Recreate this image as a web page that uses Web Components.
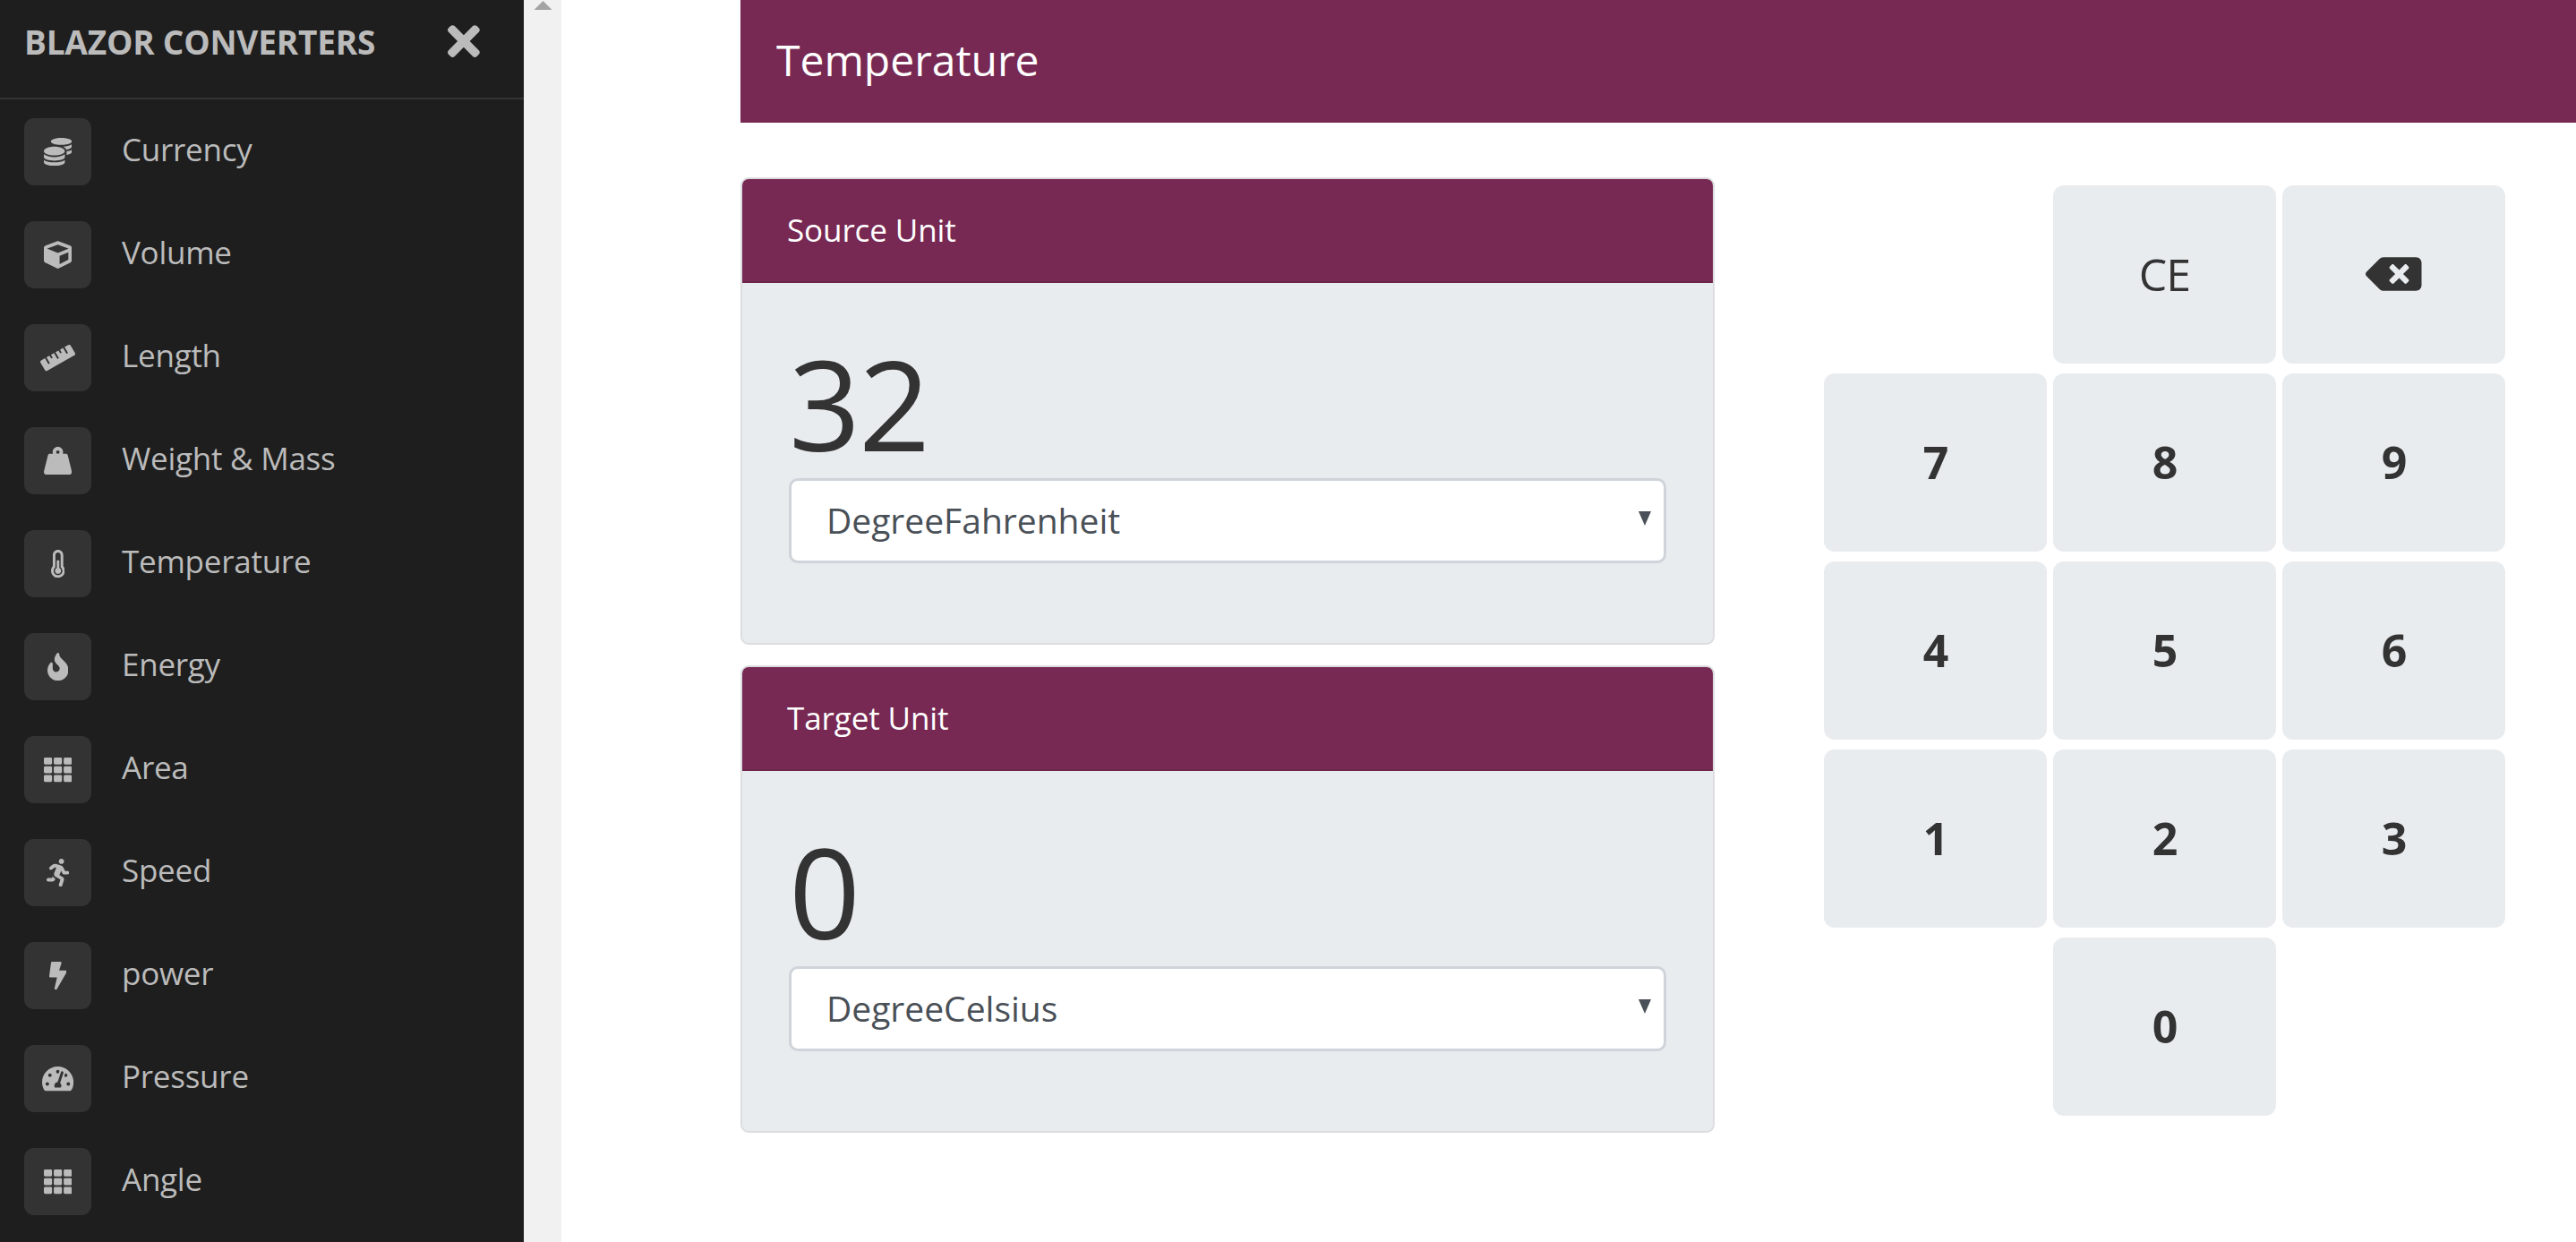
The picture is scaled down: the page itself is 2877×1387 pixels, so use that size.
<!DOCTYPE html>
<html>
<head>
<meta charset="utf-8">
<title>Blazor Converters</title>
<style>
html, body { margin: 0; height: 100%; overflow: hidden; background: #fff; }
body { font-family: "Open Sans", "Noto Sans", sans-serif; display: flex; }
</style>
</head>
<body>
<app-sidebar heading="BLAZOR CONVERTERS">
  <nav-item icon="coins">Currency</nav-item>
  <nav-item icon="cube">Volume</nav-item>
  <nav-item icon="ruler">Length</nav-item>
  <nav-item icon="weight">Weight &amp; Mass</nav-item>
  <nav-item icon="thermo">Temperature</nav-item>
  <nav-item icon="fire">Energy</nav-item>
  <nav-item icon="th">Area</nav-item>
  <nav-item icon="run">Speed</nav-item>
  <nav-item icon="bolt">power</nav-item>
  <nav-item icon="gauge">Pressure</nav-item>
  <nav-item icon="th">Angle</nav-item>
</app-sidebar>
<fake-scrollbar></fake-scrollbar>
<converter-page heading="Temperature">
  <unit-card heading="Source Unit" value="32" unit="DegreeFahrenheit"></unit-card>
  <unit-card heading="Target Unit" value="0" unit="DegreeCelsius"></unit-card>
  <key-pad slot="pad"></key-pad>
</converter-page>

<script>
// font awesome 5 solid shapes: [viewBox width, path]
const ICONS = {
  coins: [512, 'M0 405.3V448c0 35.3 86 64 192 64s192-28.7 192-64v-42.7C342.7 434.4 267.2 448 192 448S41.3 434.4 0 405.3zM320 128c106 0 192-28.7 192-64S426 0 320 0 128 28.7 128 64s86 64 192 64zM0 300.4V352c0 35.3 86 64 192 64s192-28.7 192-64v-51.6c-41.3 34-116.9 51.6-192 51.6S41.3 334.4 0 300.4zm416 11c57.3-11.1 96-31.7 96-55.4v-42.7c-23.2 16.4-57.3 27.6-96 34.5v63.6zM192 160C86 160 0 195.8 0 240s86 80 192 80 192-35.8 192-80-86-80-192-80zm219.3 56.3c60-10.8 100.7-32 100.7-56.3v-42.7c-35.5 25.1-96.5 38.6-160.7 41.8 29.5 14.3 51.2 33.5 60 57.2z'],
  cube: [512, 'M239.1 6.3l-208 78c-18.7 7-31.1 25-31.1 45v225.1c0 18.2 10.3 34.8 26.5 42.9l208 104c13.5 6.8 29.4 6.8 42.9 0l208-104c16.3-8.1 26.5-24.8 26.5-42.9V129.3c0-20-12.4-37.9-31.1-44.9l-208-78C262 2.2 250 2.2 239.1 6.3zM256 68.4l192 72v1.1l-192 78-192-78v-1.1l192-72zm32 356V275.5l160-65v133.9l-160 80z'],
  ruler: [640, 'M635.7 167.2L556.1 31.7c-8.8-15-28.3-20.1-43.5-11.5l-69 39.1L503.3 161c2.2 3.8.9 8.5-2.9 10.7l-13.8 7.8c-3.8 2.2-8.7.9-10.9-2.9L416 75l-55.2 31.3 27.9 47.4c2.2 3.8.9 8.5-2.9 10.7l-13.8 7.8c-3.8 2.2-8.7.9-10.9-2.9L333.2 122 278 153.3 337.8 255c2.2 3.7.9 8.5-2.9 10.7l-13.8 7.8c-3.8 2.2-8.7.9-10.9-2.9l-59.7-101.7-55.2 31.3 27.9 47.4c2.2 3.8.9 8.5-2.9 10.7l-13.8 7.8c-3.8 2.2-8.7.9-10.9-2.9l-27.9-47.5-55.2 31.3 59.7 101.7c2.2 3.7.9 8.5-2.9 10.7l-13.8 7.8c-3.8 2.2-8.7.9-10.9-2.9L84.9 262.9l-69 39.1C.7 310.7-4.6 329.8 4.2 344.8l79.6 135.6c8.8 15 28.3 20.1 43.5 11.5L624.1 210c15.2-8.6 20.4-27.8 11.6-42.8z'],
  weight: [512, 'M510.28 445.86l-73.03-292.13c-3.8-15.19-16.44-25.72-30.87-25.72h-60.25c3.57-10.05 5.88-20.72 5.88-32 0-53.02-42.98-96-96-96s-96 42.98-96 96c0 11.28 2.3 21.95 5.88 32h-60.25c-14.43 0-27.08 10.54-30.87 25.72L1.72 445.86C-6.61 479.17 16.38 512 48.03 512h415.95c31.64 0 54.63-32.83 46.3-66.14zM256 128c-17.64 0-32-14.36-32-32s14.36-32 32-32 32 14.36 32 32-14.36 32-32 32z'],
  thermo: [256, 'M184 384c0 30.928-25.072 56-56 56s-56-25.072-56-56 25.072-56 56-56 56 25.072 56 56zm40-84.653C243.912 322.091 256 351.636 256 384c0 70.692-57.308 128-128 128-.639 0-1.295-.004-1.935-.013C55.821 510.94-.525 452.396.007 382.127.249 350.196 12.234 321.042 32 299.347V96c0-53.019 42.981-96 96-96s96 42.981 96 96v203.347zM208 384c0-34.339-19.37-52.19-32-66.502V96c0-26.467-21.533-48-48-48S80 69.533 80 96v221.498c-12.732 14.428-31.825 32.1-31.999 66.08-.224 43.876 35.563 80.116 79.423 80.42L128 464c44.112 0 80-35.888 80-80zM104 192h48v150h-48z'],
  fire: [384, 'M216 23.86c0-23.8-30.65-32.77-44.15-13.04C48 191.85 224 200 224 288c0 35.63-29.11 64.46-64.85 63.99-35.17-.45-63.15-29.77-63.15-64.94v-85.51c0-21.7-26.47-32.23-41.43-16.5C27.8 213.16 0 261.33 0 320c0 105.87 86.13 192 192 192s192-86.13 192-192c0-170.29-168-193-168-296.14z'],
  th: [512, 'M24 32h101.3a24 24 0 0 1 24 24v80a24 24 0 0 1-24 24H24a24 24 0 0 1-24-24V56a24 24 0 0 1 24-24zM205.3 32h101.4a24 24 0 0 1 24 24v80a24 24 0 0 1-24 24H205.3a24 24 0 0 1-24-24V56a24 24 0 0 1 24-24zM386.7 32H488a24 24 0 0 1 24 24v80a24 24 0 0 1-24 24H386.7a24 24 0 0 1-24-24V56a24 24 0 0 1 24-24zM24 192h101.3a24 24 0 0 1 24 24v80a24 24 0 0 1-24 24H24a24 24 0 0 1-24-24v-80a24 24 0 0 1 24-24zM205.3 192h101.4a24 24 0 0 1 24 24v80a24 24 0 0 1-24 24H205.3a24 24 0 0 1-24-24v-80a24 24 0 0 1 24-24zM386.7 192H488a24 24 0 0 1 24 24v80a24 24 0 0 1-24 24H386.7a24 24 0 0 1-24-24v-80a24 24 0 0 1 24-24zM24 352h101.3a24 24 0 0 1 24 24v80a24 24 0 0 1-24 24H24a24 24 0 0 1-24-24v-80a24 24 0 0 1 24-24zM205.3 352h101.4a24 24 0 0 1 24 24v80a24 24 0 0 1-24 24H205.3a24 24 0 0 1-24-24v-80a24 24 0 0 1 24-24zM386.7 352H488a24 24 0 0 1 24 24v80a24 24 0 0 1-24 24H386.7a24 24 0 0 1-24-24v-80a24 24 0 0 1 24-24z'],
  run: [416, 'M272 96c26.51 0 48-21.49 48-48S298.51 0 272 0s-48 21.49-48 48 21.49 48 48 48zM113.69 317.47l-14.8 34.52H32c-17.67 0-32 14.33-32 32s14.33 32 32 32h77.45c19.25 0 36.58-11.44 44.11-29.09l8.79-20.52-10.67-6.3c-17.32-10.23-30.06-25.37-37.99-42.61zM384 223.99h-44.03l-26.06-53.25c-12.5-25.55-35.45-44.23-61.78-50.94l-71.08-21.14c-28.3-6.8-57.77-.55-80.84 17.14l-39.67 30.41c-14.03 10.75-16.69 30.83-5.92 44.86s30.84 16.66 44.86 5.92l39.69-30.41c7.67-5.89 17.44-8 25.27-6.14l14.7 4.37-37.46 87.39c-12.62 29.48-1.31 64.01 26.3 80.31l84.98 50.17-27.47 87.73c-5.28 16.86 4.11 34.81 20.97 40.09 3.19 1 6.41 1.48 9.58 1.48 13.61 0 26.23-8.77 30.52-22.45l31.64-101.06c5.91-20.77-2.89-43.08-21.64-54.39l-61.24-36.14 31.31-78.28 20.27 41.43c8 16.34 24.92 26.89 43.11 26.89H384c17.67 0 32-14.33 32-32s-14.33-31.99-32-31.99z'],
  bolt: [320, 'M296 160H180.6l42.6-129.8C227.2 15 215.7 0 200 0H56C44 0 33.8 8.9 32.2 20.8l-32 240C-1.7 275.2 9.5 288 24 288h118.7L96.6 482.5c-3.6 15.2 8 29.5 23.3 29.5 8.4 0 16.4-4.4 20.8-12l176-304c9.3-15.9-2.2-36-20.7-36z'],
  gauge: [576, 'M288 32C128.94 32 0 160.94 0 320c0 52.8 14.25 102.26 39.06 144.8 5.61 9.62 16.3 15.2 27.44 15.2h443c11.14 0 21.83-5.58 27.44-15.2C561.75 422.26 576 372.8 576 320c0-159.06-128.94-288-288-288zm0 64c14.71 0 26.58 10.13 30.32 23.65-1.11 2.26-2.64 4.23-3.45 6.67l-9.22 27.67c-5.13 3.49-10.97 6.01-17.64 6.01-17.67 0-32-14.33-32-32S270.33 96 288 96zM96 384c-17.67 0-32-14.33-32-32s14.33-32 32-32 32 14.33 32 32-14.33 32-32 32zm48-160c-17.67 0-32-14.33-32-32s14.33-32 32-32 32 14.33 32 32-14.33 32-32 32zm246.77-72.41l-61.33 184C343.13 347.33 352 364.54 352 384c0 11.72-3.38 22.55-8.88 32H232.88c-5.5-9.45-8.88-20.28-8.88-32 0-33.94 26.5-61.43 59.9-63.59l61.34-184.01c4.17-12.56 17.73-19.45 30.36-15.17 12.57 4.19 19.35 17.79 15.17 30.36zm14.66 57.2l15.52-46.55c3.47-1.29 7.13-2.23 11.05-2.23 17.67 0 32 14.33 32 32s-14.33 32-32 32c-11.38-.01-20.89-6.28-26.57-15.22zM480 384c-17.67 0-32-14.33-32-32s14.33-32 32-32 32 14.33 32 32-14.33 32-32 32z'],
  times: [352, 'M242.72 256l100.07-100.07c12.28-12.28 12.28-32.19 0-44.48l-22.24-22.24c-12.28-12.28-32.19-12.28-44.48 0L176 189.28 75.93 89.21c-12.28-12.28-32.19-12.28-44.48 0L9.21 111.45c-12.28 12.28-12.28 32.19 0 44.48L109.28 256 9.21 356.07c-12.28 12.28-12.28 32.19 0 44.48l22.24 22.24c12.28 12.28 32.2 12.28 44.48 0L176 322.72l100.07 100.07c12.28 12.28 32.2 12.28 44.48 0l22.24-22.24c12.28-12.28 12.28-32.19 0-44.48L242.72 256z'],
  backspace: [640, 'M576 64H205.26A63.97 63.97 0 0 0 160 82.75L9.37 233.37c-12.5 12.5-12.5 32.76 0 45.25L160 429.25c12 12 28.28 18.75 45.25 18.75H576c35.35 0 64-28.65 64-64V128c0-35.35-28.65-64-64-64zm-84.69 254.06c6.25 6.25 6.25 16.38 0 22.63l-22.62 22.62c-6.25 6.25-16.38 6.25-22.63 0L384 301.25l-62.06 62.06c-6.25 6.25-16.38 6.25-22.63 0l-22.62-22.62c-6.25-6.25-6.25-16.38 0-22.63L338.75 256l-62.06-62.06c-6.25-6.25-6.25-16.38 0-22.63l22.62-22.62c6.25-6.25 16.38-6.25 22.63 0L384 210.75l62.06-62.06c6.25-6.25 16.38-6.25 22.63 0l22.62 22.62c6.25 6.25 6.25 16.38 0 22.63L429.25 256l62.06 62.06z']
};

function svgIcon(name, em){
  const [w, d] = ICONS[name];
  return `<svg width="${w/512*em}" height="${em}" viewBox="0 0 ${w} 512" fill="currentColor"><path d="${d}"/></svg>`;
}

class AppSidebar extends HTMLElement {
  constructor(){
    super();
    this.attachShadow({mode:'open'}).innerHTML = `
<style>
:host { display: block; flex: 0 0 585px; height: 100%; background: #1e1e1e; color: #bbb; overflow: hidden; }
.top {
  display: flex; align-items: center; justify-content: space-between;
  height: 111px; padding: 0 49px 17px 27px; box-sizing: border-box;
  border-bottom: 2px solid #333;
}
.title { font-weight: 700; font-size: 37px; letter-spacing: -.2px; white-space: nowrap; }
.close { display: flex; }
.list { display: flex; flex-direction: column; gap: 40px; padding: 21px 0 0 27px; }
</style>
<div class="top">
  <div class="title">${this.getAttribute('heading')}</div>
  <div class="close">${svgIcon('times', 52)}</div>
</div>
<div class="list"><slot></slot></div>`;
  }
}

class NavItem extends HTMLElement {
  constructor(){
    super();
    this.attachShadow({mode:'open'}).innerHTML = `
<style>
:host { display: flex; align-items: center; gap: 34px; height: 75px; color: #bbb; font-size: 35px; }
.box {
  flex: none; width: 75px; height: 75px; border-radius: 11px; background: #333;
  display: flex; align-items: center; justify-content: center;
}
.label { position: relative; top: -3px; letter-spacing: -.25px; }
</style>
<div class="box">${svgIcon(this.getAttribute('icon'), 31.25)}</div>
<div class="label"><slot></slot></div>`;
  }
}

class FakeScrollbar extends HTMLElement {
  constructor(){
    super();
    this.attachShadow({mode:'open'}).innerHTML = `
<style>
:host { display: block; flex: 0 0 42px; height: 100%; background: #f1f1f1; }
svg { display: block; margin: 0 auto; }
</style>
<svg width="21" height="12" viewBox="0 0 21 12"><path d="M10.5 1 L20.5 11 H.5 Z" fill="#a3a3a3"/></svg>`;
  }
}

class ConverterPage extends HTMLElement {
  constructor(){
    super();
    this.attachShadow({mode:'open'}).innerHTML = `
<style>
:host { display: block; flex: 1; min-width: 0; padding-left: 200px; color: #333; }
.bar {
  height: 137px; background: #772953; color: #fff; box-sizing: border-box;
  padding: 0 0 5px 40px; display: flex; align-items: center;
  font-size: 48px; letter-spacing: 0;
}
.row { display: flex; padding-top: 61px; }
.cards { flex: 0 0 1088px; display: flex; flex-direction: column; gap: 23px; }
.pad { margin-left: 122px; padding-top: 9px; }
</style>
<div class="bar">${this.getAttribute('heading')}</div>
<div class="row">
  <div class="cards"><slot></slot></div>
  <div class="pad"><slot name="pad"></slot></div>
</div>`;
  }
}

class UnitCard extends HTMLElement {
  constructor(){
    super();
    this.attachShadow({mode:'open'}).innerHTML = `
<style>
:host {
  display: block; height: 522px; box-sizing: border-box; background: #e9ecef;
  border: 2px solid #dcdddf; border-radius: 9px; overflow: hidden;
}
.head {
  height: 116px; box-sizing: border-box; background: #772953; color: #fff;
  border-bottom: 2px solid #6c2549;
  padding: 0 0 2px 50px; display: flex; align-items: center;
  font-size: 35px; letter-spacing: -.1px;
}
.body { padding: 50px 52px 0 52px; }
.value { font-size: 140px; font-weight: 400; line-height: 168px; color: #333; letter-spacing: -2px; }
.select {
  height: 95px; box-sizing: border-box; background: #fff; color: #495057;
  border: 3px solid #ced4da; border-radius: 10px;
  padding: 0 14px 3px 39px; display: flex; align-items: center; justify-content: space-between;
  font-size: 39px;
}
.caret { width: 0; height: 0; border-left: 7px solid transparent; border-right: 7px solid transparent; border-top: 16px solid #495057; margin-bottom: 2px; }
</style>
<div class="head">${this.getAttribute('heading')}</div>
<div class="body">
  <div class="value">${this.getAttribute('value')}</div>
  <div class="select"><span>${this.getAttribute('unit')}</span><span class="caret"></span></div>
</div>`;
  }
}

class KeyPad extends HTMLElement {
  constructor(){
    super();
    const keys = [
      ['', 0], ['CE', 1], ['back', 1],
      ['7', 2], ['8', 2], ['9', 2],
      ['4', 2], ['5', 2], ['6', 2],
      ['1', 2], ['2', 2], ['3', 2],
      ['', 0], ['0', 2], ['', 0]
    ];
    const cells = keys.map(([k, kind]) => {
      if (kind === 0) return '<span></span>';
      if (k === 'back') return `<button>${svgIcon('backspace', 50)}</button>`;
      return `<button class="${kind === 2 ? 'num' : ''}">${k}</button>`;
    }).join('');
    this.attachShadow({mode:'open'}).innerHTML = `
<style>
:host { display: grid; grid-template-columns: repeat(3, 249px); grid-auto-rows: 199px; column-gap: 7px; row-gap: 11px; }
button {
  border: 0; margin: 0; padding: 0 0 2px; background: #e9ecef; color: #333; border-radius: 12px;
  font-family: inherit; font-size: 50px; letter-spacing: -1px;
  display: flex; align-items: center; justify-content: center;
}
.num { font-weight: 700; }
</style>
${cells}`;
  }
}

customElements.define('app-sidebar', AppSidebar);
customElements.define('nav-item', NavItem);
customElements.define('fake-scrollbar', FakeScrollbar);
customElements.define('converter-page', ConverterPage);
customElements.define('unit-card', UnitCard);
customElements.define('key-pad', KeyPad);
</script>
</body>
</html>
